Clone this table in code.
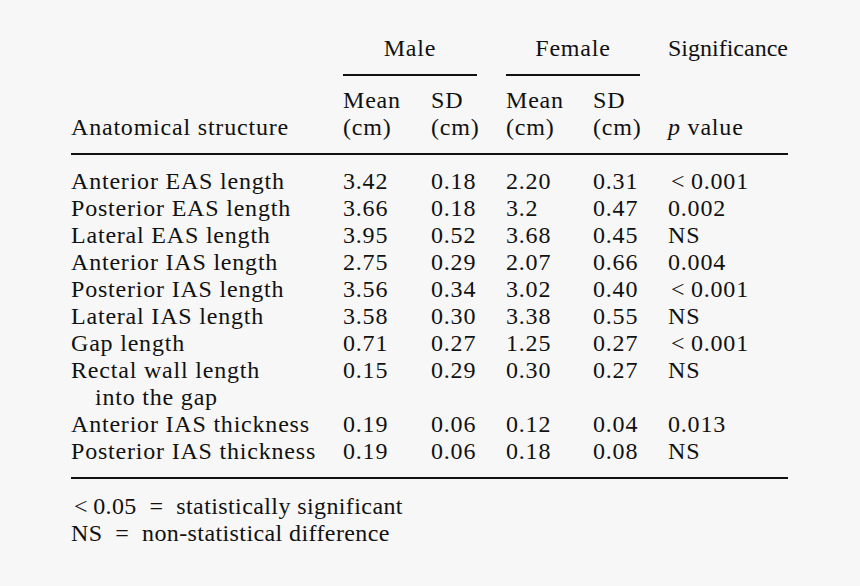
const rows: { label: string[]; m1: string; s1: string; m2: string; s2: string; p: string }[] = [
  { label: ['Anterior EAS length'], m1: '3.42', s1: '0.18', m2: '2.20', s2: '0.31', p: '< 0.001' },
  { label: ['Posterior EAS length'], m1: '3.66', s1: '0.18', m2: '3.2', s2: '0.47', p: '0.002' },
  { label: ['Lateral EAS length'], m1: '3.95', s1: '0.52', m2: '3.68', s2: '0.45', p: 'NS' },
  { label: ['Anterior IAS length'], m1: '2.75', s1: '0.29', m2: '2.07', s2: '0.66', p: '0.004' },
  { label: ['Posterior IAS length'], m1: '3.56', s1: '0.34', m2: '3.02', s2: '0.40', p: '< 0.001' },
  { label: ['Lateral IAS length'], m1: '3.58', s1: '0.30', m2: '3.38', s2: '0.55', p: 'NS' },
  { label: ['Gap length'], m1: '0.71', s1: '0.27', m2: '1.25', s2: '0.27', p: '< 0.001' },
  { label: ['Rectal wall length', 'into the gap'], m1: '0.15', s1: '0.29', m2: '0.30', s2: '0.27', p: 'NS' },
  { label: ['Anterior IAS thickness'], m1: '0.19', s1: '0.06', m2: '0.12', s2: '0.04', p: '0.013' },
  { label: ['Posterior IAS thickness'], m1: '0.19', s1: '0.06', m2: '0.18', s2: '0.08', p: 'NS' },
];

const cols = 'grid grid-cols-[272px_88px_75px_87px_75px_120px]';

const PValue = ({ v }: { v: string }) => {
  if (v.startsWith('<')) return <span className="pl-[3px]">{'<\u2009' + v.slice(2)}</span>;
  return <span>{v}</span>;
};

export default function App() {
  return (
    <div className="w-[860px] h-[586px] bg-[#f7f7f7] text-[#111] font-['Liberation_Serif','Times_New_Roman',serif] text-[24px] leading-[27px] tracking-[0.8px]">
      <div className="pl-[71px] pt-[35px] w-[788px]">
        {/* group headings */}
        <div className={cols}>
          <div />
          <div className="col-span-2 w-[134px] text-center">Male</div>
          <div className="col-span-2 w-[134px] text-center">Female</div>
          <div className="tracking-normal">Significance</div>
        </div>
        <div className={cols + ' mt-[12px]'}>
          <div />
          <div className="col-span-2 h-[2px] w-[134px] bg-[#111]" />
          <div className="col-span-2 h-[2px] w-[134px] bg-[#111]" />
          <div />
        </div>

        {/* column headings */}
        <div className={cols + ' mt-[11px]'}>
          <div className="self-end">Anatomical structure</div>
          <div>Mean<br />(cm)</div>
          <div>SD<br />(cm)</div>
          <div>Mean<br />(cm)</div>
          <div>SD<br />(cm)</div>
          <div className="self-end">
            <i>p</i> value
          </div>
        </div>
        <div className="h-[2px] bg-[#111] mt-[12px]" />

        {/* body */}
        <div className="mt-[13px]">
          {rows.map((r) => (
            <div key={r.label[0]} className={cols}>
              <div>
                {r.label.map((l, i) => (
                  <div key={l} className={i > 0 ? 'pl-[24px]' : ''}>
                    {l}
                  </div>
                ))}
              </div>
              <div>{r.m1}</div>
              <div>{r.s1}</div>
              <div>{r.m2}</div>
              <div>{r.s2}</div>
              <div>
                <PValue v={r.p} />
              </div>
            </div>
          ))}
        </div>
        <div className="h-[2px] bg-[#111] mt-[12px]" />

        {/* notes */}
        <div className="mt-[14px] tracking-[0.4px]">
          <div className="pl-[3px]">{'<\u20090.05 \u00a0=\u00a0 statistically significant'}</div>
          <div>{'NS \u00a0=\u00a0 non-statistical difference'}</div>
        </div>
      </div>
    </div>
  );
}
